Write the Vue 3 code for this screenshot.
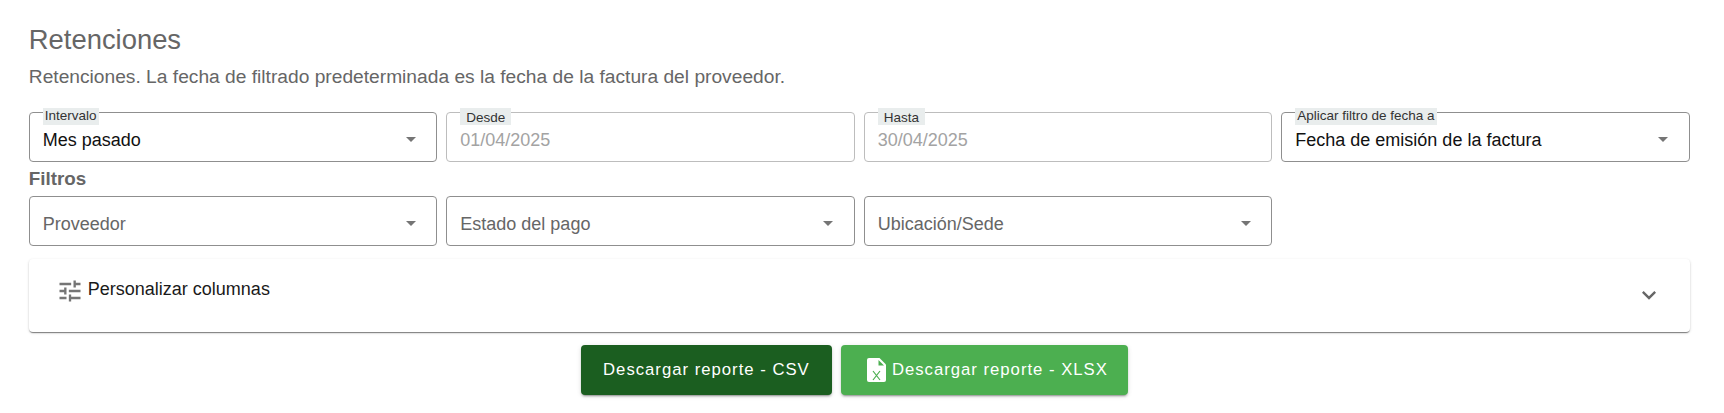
<script setup>
const row1 = [
  { label: 'Intervalo', value: 'Mes pasado', select: true, cls: 'lab-a' },
  { label: 'Desde', value: '01/04/2025', disabled: true, cls: 'lab-b' },
  { label: 'Hasta', value: '30/04/2025', disabled: true, cls: 'lab-b' },
  { label: 'Aplicar filtro de fecha a', value: 'Fecha de emisión de la factura', select: true, cls: 'lab-a' }
]
const row2 = ['Proveedor', 'Estado del pago', 'Ubicación/Sede']
</script>

<template>
  <main class="page">
    <h1 class="title">Retenciones</h1>
    <p class="sub">Retenciones. La fecha de filtrado predeterminada es la fecha de la factura del proveedor.</p>

    <section class="grid">
      <div v-for="f in row1" :key="f.label" class="field" :class="{ disabled: f.disabled }">
        <span class="label" :class="f.cls">{{ f.label }}</span>
        <span class="value">{{ f.value }}</span>
        <span v-if="f.select" class="arrow"></span>
      </div>
    </section>

    <h2 class="filters">Filtros</h2>

    <section class="grid">
      <div v-for="f in row2" :key="f" class="field">
        <span class="value placeholder">{{ f }}</span>
        <span class="arrow"></span>
      </div>
    </section>

    <section class="card">
      <svg class="tune" viewBox="0 0 24 24" width="28" height="28" fill="#757575">
        <path d="M3 17v2h6v-2H3zM3 5v2h10V5H3zm10 16v-2h8v-2h-8v-2h-2v6h2zM7 9v2H3v2h4v2h2V9H7zm14 4v-2H11v2h10zm-6-4h2V7h4V5h-4V3h-2v6z" />
      </svg>
      <span class="card-text">Personalizar columnas</span>
      <svg class="chev" viewBox="0 0 24 24" width="28" height="28" fill="#666">
        <path d="M16.59 8.59 12 13.17 7.41 8.59 6 10l6 6 6-6z" />
      </svg>
    </section>

    <div class="actions">
      <button class="btn dark">Descargar reporte - CSV</button>
      <button class="btn light">
        <svg viewBox="0 0 19 24" width="19" height="24" class="file">
          <path fill="#fff" d="M2 0h10.5L19 6.5V22a2 2 0 0 1-2 2H2a2 2 0 0 1-2-2V2a2 2 0 0 1 2-2z" />
          <path fill="#4caf50" d="M11.5 2l5.5 5.5h-5.5z" />
          <path fill="none" stroke="#4caf50" stroke-width="1.2" d="M6 13l7 9M13 13l-7 9" />
        </svg>
        Descargar reporte - XLSX
      </button>
    </div>
  </main>
</template>

<style scoped>
.page {
  box-sizing: border-box;
  width: 1724px;
  height: 413px;
  padding: 25px 34px 0 28.8px;
  font-family: "Liberation Sans", Arial, sans-serif;
  background: #fff;
  overflow: hidden;
}
.title {
  margin: 0;
  font-size: 27.4px;
  font-weight: 400;
  line-height: 30px;
  color: #666;
}
.sub {
  margin: 9px 0 0;
  font-size: 19.2px;
  line-height: 26px;
  color: #666;
}
.grid {
  display: grid;
  grid-template-columns: repeat(4, 408.5px);
  gap: 9px;
}
.sub + .grid { margin-top: 22px; }
.field {
  position: relative;
  box-sizing: border-box;
  height: 50px;
  display: flex;
  align-items: center;
  padding: 6px 13px 0;
  border: 1px solid #8f8f8f;
  border-radius: 4px;
  font-size: 18px;
}
.field.disabled { border-color: #bdbdbd; }
.value { color: #111; }
.disabled .value { color: #a3a3a3; }
.placeholder { color: #666; }
.label {
  position: absolute;
  top: -5px;
  left: 13px;
  height: 17px;
  font-size: 13.5px;
  background: #e9eded;
  color: #333;
}
.lab-a { padding: 0 2px; line-height: 16px; }
.lab-b { padding: 0 6px; line-height: 19px; }
.arrow {
  position: absolute;
  right: 20.5px;
  top: 24px;
  width: 0;
  height: 0;
  border-left: 5.5px solid transparent;
  border-right: 5.5px solid transparent;
  border-top: 5.5px solid #757575;
}
.filters {
  margin: 5px 0 5px;
  font-size: 18.8px;
  font-weight: 700;
  line-height: 24px;
  color: #666;
}
.card {
  display: flex;
  align-items: flex-start;
  box-sizing: border-box;
  height: 73px;
  margin-top: 13px;
  padding: 18px 27px 0 27.5px;
  background: #fff;
  border-radius: 4px;
  box-shadow: 0 2px 1px -1px rgba(0,0,0,.3), 0 1px 1px 0 rgba(0,0,0,.2), 0 1px 3px 0 rgba(0,0,0,.16);
}
.card-text {
  margin-left: 3.5px;
  font-size: 18px;
  line-height: 24px;
  color: #1a1a1a;
}
.chev { margin-left: auto; margin-top: 4px; }
.actions {
  display: flex;
  justify-content: center;
  gap: 9px;
  margin: 13px 10px 0 0;
}
.btn {
  display: flex;
  align-items: center;
  justify-content: center;
  gap: 6px;
  height: 50px;
  border: 0;
  border-radius: 4px;
  color: #fff;
  font-family: inherit;
  font-size: 16.7px;
  letter-spacing: 1px;
  box-shadow: 0 3px 1px -2px rgba(0,0,0,.2), 0 2px 2px 0 rgba(0,0,0,.14), 0 1px 5px 0 rgba(0,0,0,.12);
}
.dark { width: 251px; background: #1b5e20; }
.light { width: 287px; background: #4caf50; justify-content: flex-start; padding: 0 0 0 26px; }
</style>
